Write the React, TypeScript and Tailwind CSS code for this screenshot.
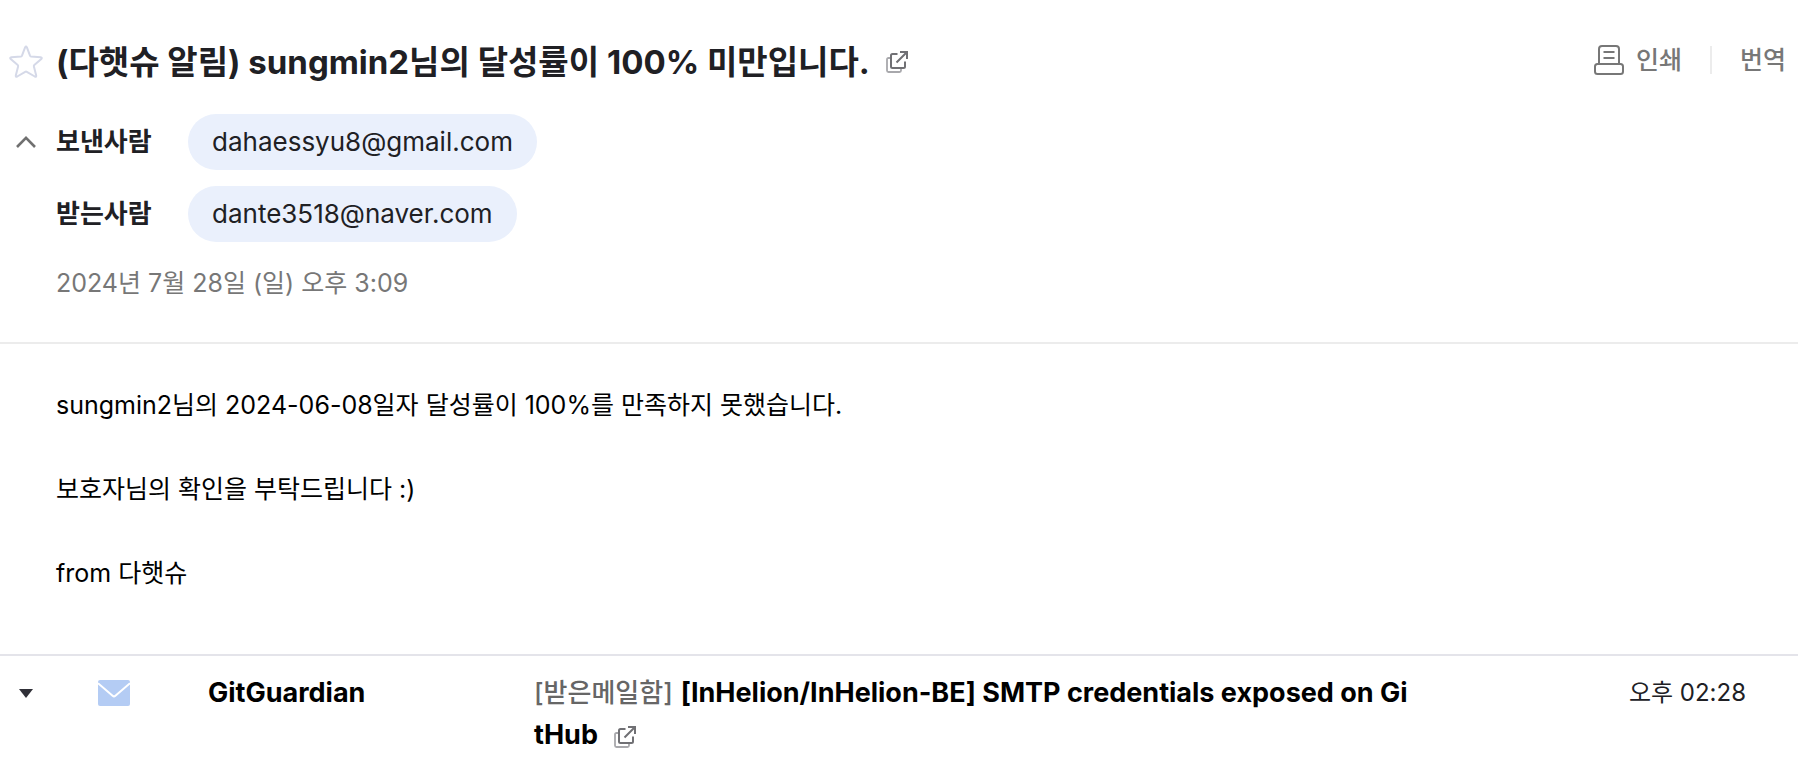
function StarIcon() {
  return (
    <svg width="36" height="36" viewBox="0 0 36 36" fill="none" stroke="#d5d9e8" strokeWidth="2" strokeLinejoin="round" aria-hidden="true">
      <path d="M17.1 3.4q.9-1.8 1.8 0l3.1 8.3q.3.7 1 .8l9.600.8q2 .3.7 1.700l-7 6.100q-.6.5-.4 1.300l2.300 9q.3 2-1.400 1.100l-8-4.700q-.8-.4-1.600 0l-8 4.700q-1.700.9-1.400-1.100l2.300-9q.2-.8-.4-1.300l-7-6.100q-1.300-1.400.7-1.700l9.600-.8q.7-.1 1-.8z" />
    </svg>
  );
}

function ChevronUpIcon() {
  return (
    <svg width="20" height="12" viewBox="0 0 20 12" fill="none" stroke="#707070" strokeWidth="2.6" aria-hidden="true">
      <path d="M1 11 10 1.9 19 11" />
    </svg>
  );
}

function NewWindowIcon() {
  return (
    <svg className="inline-block" width="22" height="22" viewBox="0 0 22 22" fill="none" aria-hidden="true">
      <path d="M4 7H2.5Q1 7 1 8.5V19.5Q1 21 2.5 21H13.5Q15 21 15 19.5V18" stroke="#a8a8ac" strokeWidth="1.8" />
      <path d="M11.5 3H6.5Q5 3 5 4.5V15.5Q5 17 6.5 17H17.5Q19 17 19 15.5V10.5" stroke="#707074" strokeWidth="2" />
      <path d="M14 1H21V8M21 1 10.5 11.5" stroke="#707074" strokeWidth="2" />
    </svg>
  );
}

function PrintIcon() {
  return (
    <svg width="30" height="30" viewBox="0 0 30 30" fill="none" stroke="#777" strokeWidth="2" aria-hidden="true">
      <path d="M5 19V4Q5 1 8 1H22Q25 1 25 4V19" />
      <rect x="1" y="19" width="28" height="10" rx="2.5" />
      <path d="M9.5 7H20.5M9.5 13H20.5" />
    </svg>
  );
}

function MailIcon() {
  return (
    <svg width="32" height="26" viewBox="0 0 32 26" fill="none" aria-hidden="true">
      <rect width="32" height="26" rx="2" fill="#b4ccf4" />
      <path d="M0 3.3 14.6 15.8Q16 17 17.4 15.8L32 3.3" stroke="#fff" strokeWidth="2" />
    </svg>
  );
}

function CaretIcon() {
  return (
    <svg width="14" height="9" viewBox="0 0 14 9" fill="#303038" aria-hidden="true">
      <path d="M0 0H14L7 9Z" />
    </svg>
  );
}

function AddressRow({ label, address }: { label: string; address: string }) {
  return (
    <div className="flex items-center">
      <dt className="w-33 shrink-0 text-[26px] font-bold">{label}</dt>
      <dd>
        <button type="button" className="h-14 rounded-full bg-[#eaf0fc] px-6 text-[26px]">
          {address}
        </button>
      </dd>
    </div>
  );
}

export default function App() {
  return (
    <main className="min-h-screen bg-white font-[Inter,'Noto_Sans_CJK_KR',sans-serif] text-[25px] leading-[42px] text-black" lang="ko">
      <header className="border-b-2 border-[#ececec] pt-9 pb-[38px] text-[#202024]">
        <div className="flex items-start">
          <button type="button" aria-label="중요 메일" className="flex h-[52px] w-14 shrink-0 items-center pl-2">
            <StarIcon />
          </button>
          <h1 className="flex items-center gap-4 text-[33px] leading-[52px] font-bold">
            (다햇슈 알림) sungmin2님의 달성률이 100% 미만입니다.
            <a href="#message" aria-label="새 창으로 열기" className="flex">
              <NewWindowIcon />
            </a>
          </h1>
          <div className="ml-auto flex h-12 shrink-0 items-center pr-3 font-medium text-[#777]">
            <button type="button" className="flex items-center gap-3">
              <PrintIcon />
              인쇄
            </button>
            <span className="mx-7 h-7 w-0.5 bg-[#ececec]" />
            <button type="button">번역</button>
          </div>
        </div>
        <div className="mt-[26px] flex items-start">
          <button type="button" aria-label="상세 정보 접기" className="flex h-14 w-14 shrink-0 items-center pl-4">
            <ChevronUpIcon />
          </button>
          <div>
            <dl className="flex flex-col gap-4">
              <AddressRow label="보낸사람" address="dahaessyu8@gmail.com" />
              <AddressRow label="받는사람" address="dante3518@naver.com" />
            </dl>
            <p className="mt-5 text-[#777]">2024년 7월 28일 (일) 오후 3:09</p>
          </div>
        </div>
      </header>

      <article id="message" className="flex flex-col gap-[42px] pt-10 pb-15 pl-14">
        <p>sungmin2님의 2024-06-08일자 달성률이 100%를 만족하지 못했습니다.</p>
        <p>보호자님의 확인을 부탁드립니다 :)</p>
        <p>from 다햇슈</p>
      </article>

      <section className="flex items-start border-t-2 border-[#e4e4ea] pt-4">
        <button type="button" aria-label="목록 펼치기" className="flex h-[42px] w-[98px] shrink-0 items-center pl-[19px]">
          <CaretIcon />
        </button>
        <span className="flex h-[42px] w-[110px] shrink-0 items-center">
          <MailIcon />
        </span>
        <a href="#sender" className="w-[326px] shrink-0 text-[27px] font-bold">
          GitGuardian
        </a>
        <p className="min-w-0 flex-1 text-[27px] font-bold break-all">
          <span className="mr-2 text-[26px] font-medium text-[#666]">[받은메일함]</span>
          <a href="#mail">[InHelion/InHelion-BE] SMTP credentials exposed on GitHub</a>
          <a href="#mail" aria-label="새 창으로 열기" className="ml-4">
            <NewWindowIcon />
          </a>
        </p>
        <time className="w-96 shrink-0 pr-13 text-right text-[24px] text-[#202024]">오후 02:28</time>
      </section>
    </main>
  );
}
